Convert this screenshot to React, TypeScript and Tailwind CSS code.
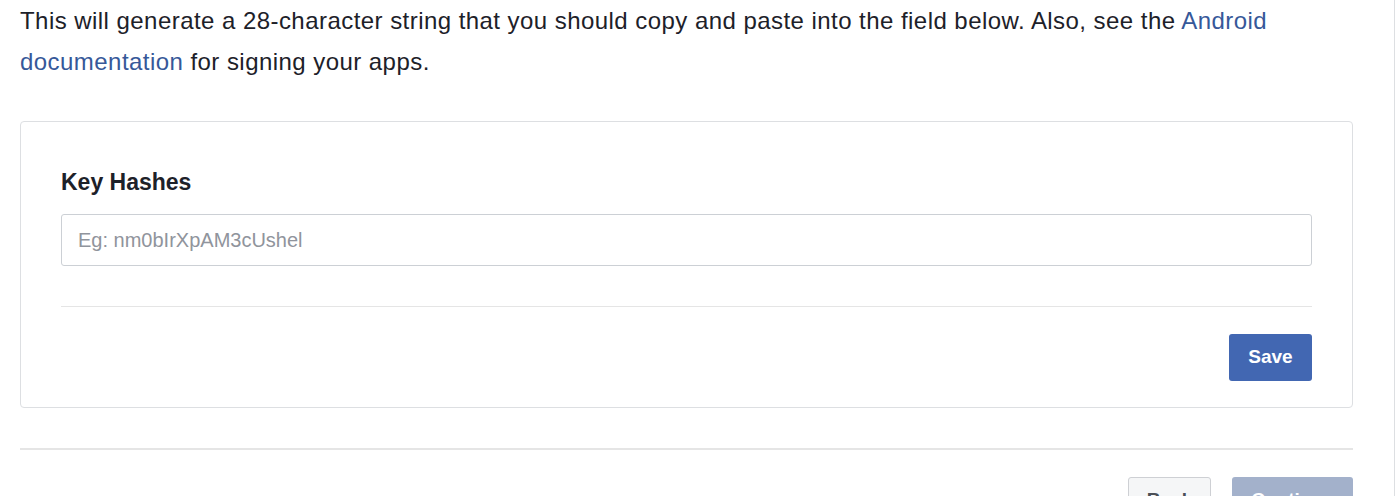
import React from 'react';

export default function App() {
  return (
    <div className="w-full h-[496px] overflow-hidden bg-white">
      <div className="w-[1395px] h-full border-r border-[#dddfe2] pl-[20px] pr-[41px] font-['Liberation_Sans',Arial,sans-serif] text-[#1d2129]">
        {/* intro text */}
        <p className="text-[24px] leading-[41px] tracking-[0.45px]">
          This will generate a 28-character string that you should copy and paste into the field below. Also, see the{' '}
          <a href="#" className="text-[#365899]">
            Android documentation
          </a>{' '}
          for signing your apps.
        </p>

        {/* key hashes card */}
        <div className="mt-[39px] border border-[#dddfe2] rounded-[4px] px-[40px] pt-[48px] pb-[26px]">
          <div className="text-[23px] leading-6 font-bold">Key Hashes</div>
          <input
            type="text"
            placeholder="Eg: nm0bIrXpAM3cUshel"
            className="mt-[20px] block w-full h-[52px] border border-[#ccd0d5] rounded-[3px] px-[16px] text-[20px] outline-none placeholder:text-[#90949c]"
          />
          <div className="mt-[40px] border-t border-[#e5e5e5]" />
          <div className="mt-[27px] flex justify-end">
            <button className="h-[47px] w-[83px] rounded-[3px] bg-[#4267b2] text-white text-[19px] font-bold">
              Save
            </button>
          </div>
        </div>

        {/* footer */}
        <div className="mt-[40px] border-t-2 border-[#e5e5e5]" />
        <div className="mt-[27px] flex justify-end gap-[21px]">
          <button className="h-[47px] w-[83px] rounded-[3px] border border-[#ced0d4] bg-[#f5f6f7] text-[#4b4f56] text-[19px] font-bold">
            Back
          </button>
          <button className="h-[47px] w-[121px] rounded-[3px] bg-[#a3b1cb] text-white text-[19px] font-bold">
            Continue
          </button>
        </div>
      </div>
    </div>
  );
}
